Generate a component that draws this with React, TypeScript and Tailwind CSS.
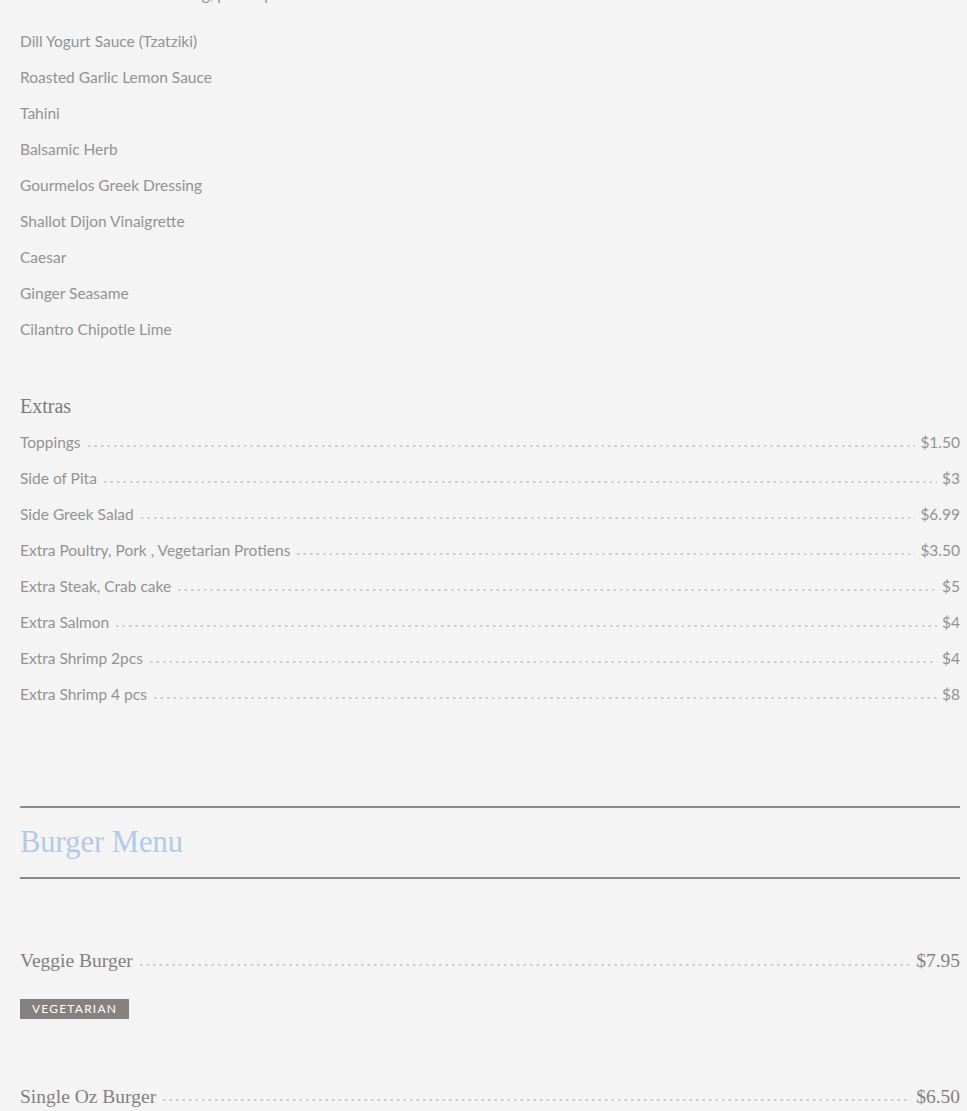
const dressings = [
  'Dill Yogurt Sauce (Tzatziki)',
  'Roasted Garlic Lemon Sauce',
  'Tahini',
  'Balsamic Herb',
  'Gourmelos Greek Dressing',
  'Shallot Dijon Vinaigrette',
  'Caesar',
  'Ginger Seasame',
  'Cilantro Chipotle Lime',
];

const extras = [
  { name: 'Toppings', price: '$1.50' },
  { name: 'Side of Pita', price: '$3' },
  { name: 'Side Greek Salad', price: '$6.99' },
  { name: 'Extra Poultry, Pork , Vegetarian Protiens', price: '$3.50' },
  { name: 'Extra Steak, Crab cake', price: '$5' },
  { name: 'Extra Salmon', price: '$4' },
  { name: 'Extra Shrimp 2pcs', price: '$4' },
  { name: 'Extra Shrimp 4 pcs', price: '$8' },
];

const sans = "font-['Lato','Open_Sans',sans-serif]";
const serif = "font-['Liberation_Serif','DejaVu_Serif',serif]";

function Leader() {
  return (
    <span className="flex-1 mx-[5px] mt-[8px] h-[2px] bg-[radial-gradient(circle,#c4c4c4_0.9px,transparent_1.3px)] bg-[length:6.5px_2px] bg-repeat-x" />
  );
}

export default function App() {
  return (
    <div className="min-h-[1111px] bg-[#f4f4f4] overflow-hidden">
      <div className={`pl-5 pr-[7px] ${sans} text-[15.5px] text-[#929292]`}>
        {/* cut-off line from previous section */}
        <p className="-mt-[24px] leading-[36px] h-[36px]">Choice of Sauce or Dressing, please pick one</p>

        <ul className="pt-[11px]">
          {dressings.map((d) => (
            <li key={d} className="leading-[36px] h-[36px]">
              {d}
            </li>
          ))}
        </ul>

        {/* Extras */}
        <h3 className={`mt-[41px] leading-[36px] h-[36px] ${serif} text-[20px] text-[#7b7b7b]`}>Extras</h3>
        <ul>
          {extras.map((e) => (
            <li key={e.name} className="flex items-center leading-[36px] h-[36px]">
              <span>{e.name}</span>
              <Leader />
              <span>{e.price}</span>
            </li>
          ))}
        </ul>

        {/* Burger Menu */}
        <div className="mt-[94px] border-t-2 border-b-2 border-[#8a8a8a] h-[73px] flex items-center">
          <h2 className={`${serif} text-[30.5px] text-[#b3c9e6]`}>Burger Menu</h2>
        </div>

        <div className={`mt-[64px] flex items-center h-[36px] ${serif} text-[19.5px] text-[#858080]`}>
          <span>Veggie Burger</span>
          <Leader />
          <span>$7.95</span>
        </div>
        <div className="mt-[17px]">
          <span className="inline-flex items-center h-[20px] px-[12px] bg-[#86807e] text-white text-[12px] tracking-[0.1em] uppercase">
            Vegetarian
          </span>
        </div>

        <div className={`mt-[59px] flex items-center h-[36px] ${serif} text-[19.5px] text-[#858080]`}>
          <span>Single Oz Burger</span>
          <Leader />
          <span>$6.50</span>
        </div>
      </div>
    </div>
  );
}
